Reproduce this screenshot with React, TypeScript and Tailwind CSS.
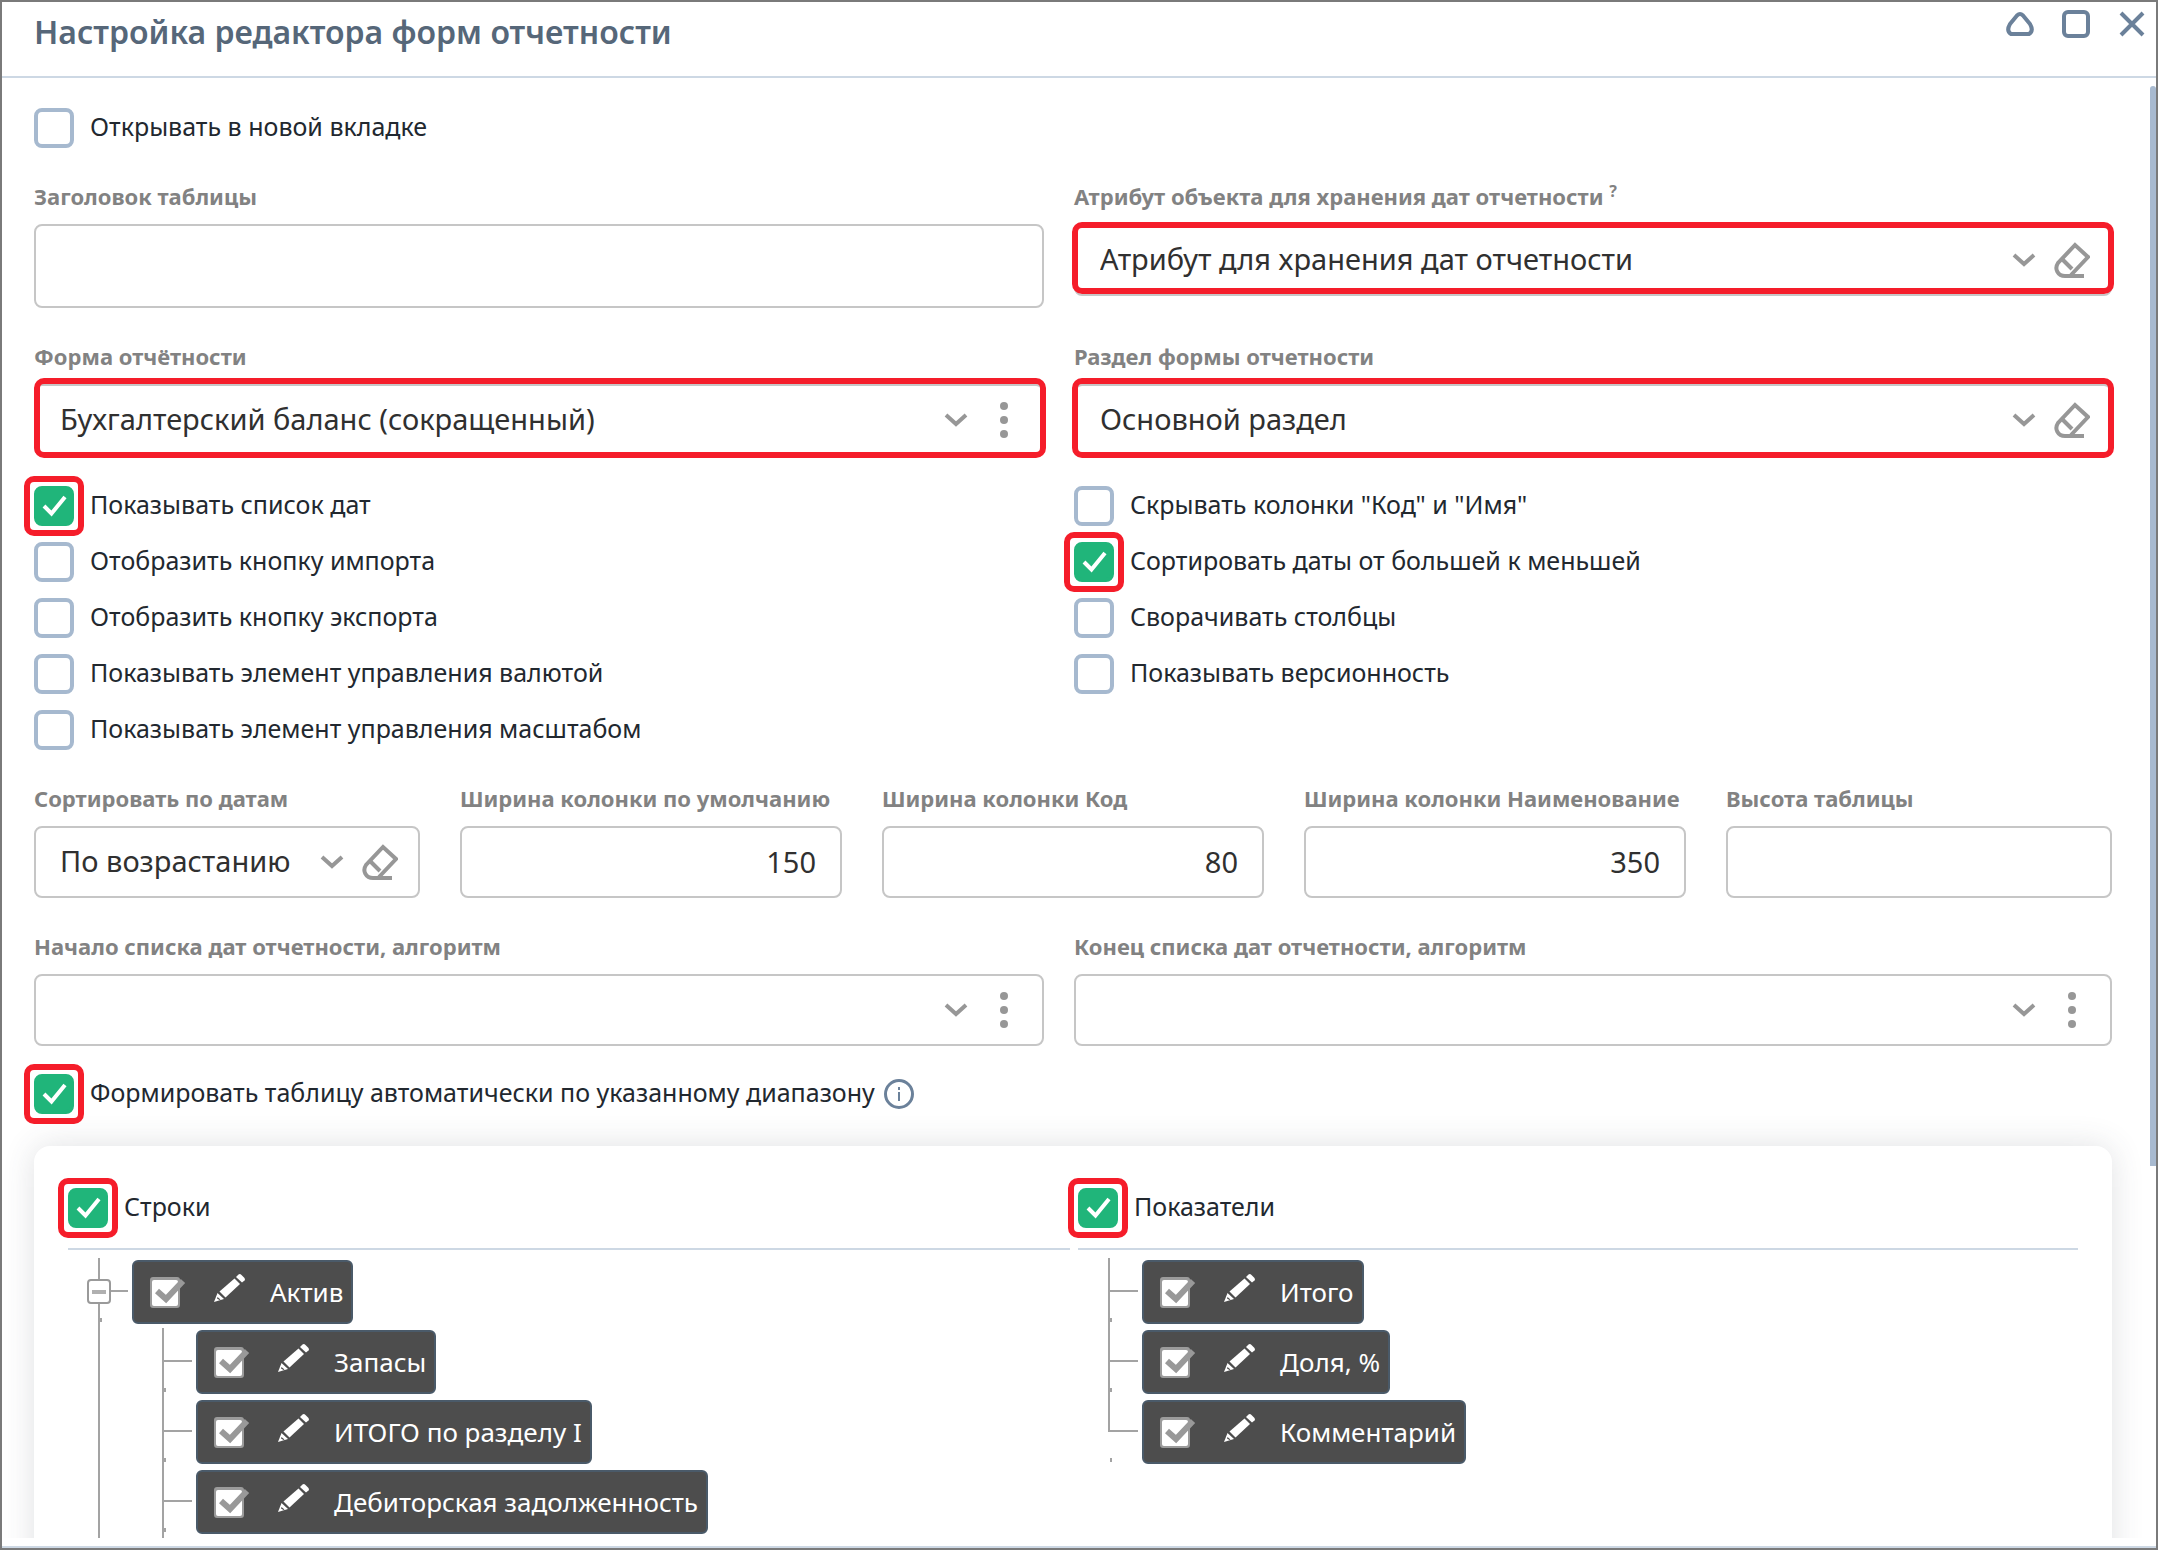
import type { ReactNode } from 'react';
import { useId } from 'react';

function ChevronIcon() {
  return (
    <svg className="pointer-events-none h-6 w-6 shrink-0" viewBox="0 0 24 24" fill="none" stroke="#979797" strokeWidth="4">
      <path d="M2 7 L12 16 L22 7" />
    </svg>
  );
}

function EraserIcon() {
  return (
    <svg className="h-9 w-9" viewBox="0 0 36 36" fill="none" stroke="#979797" strokeWidth="4" strokeLinejoin="miter">
      <path d="M30 34 H11 C4 34 0 27 4 21 L21 3 L34 15 L17 33" />
      <path d="M8 17 L18 27" />
    </svg>
  );
}

function DotsIcon() {
  return (
    <svg className="h-9 w-9" viewBox="0 0 36 36" fill="#979797">
      <circle cx="18" cy="4" r="4" />
      <circle cx="18" cy="18" r="4" />
      <circle cx="18" cy="32" r="4" />
    </svg>
  );
}

function FieldLabel({ htmlFor, children }: { htmlFor: string; children: ReactNode }) {
  return (
    <label htmlFor={htmlFor} className="mb-3 block h-7 text-[22px] leading-6 font-bold whitespace-nowrap text-[#828282]">
      {children}
    </label>
  );
}

interface SelectFieldProps {
  label: ReactNode;
  value?: string;
  action: 'clear' | 'menu';
  frame?: string;
}

function SelectField({ label, value = '', action, frame }: SelectFieldProps) {
  const id = useId();
  return (
    <div className="min-w-0">
      <FieldLabel htmlFor={id}>{label}</FieldLabel>
      <div className="relative flex h-[72px] items-center rounded-lg border-2 border-[#c6c6c6] pr-5">
        <select id={id} className="h-full min-w-0 flex-1 appearance-none bg-transparent pb-[2px] pl-6 text-[29px] text-[#303030] outline-none">
          <option>{value}</option>
        </select>
        <ChevronIcon />
        <button type="button" aria-label={action === 'clear' ? 'Очистить' : 'Меню'} className="ml-[18px] shrink-0">
          {action === 'clear' ? <EraserIcon /> : <DotsIcon />}
        </button>
        {frame && <span className={`pointer-events-none absolute rounded-[10px] border-6 border-[#f51d2a] ${frame}`} />}
      </div>
    </div>
  );
}

interface TextFieldProps {
  label: string;
  value?: string;
  tall?: boolean;
}

function TextField({ label, value = '', tall }: TextFieldProps) {
  const id = useId();
  return (
    <div className="min-w-0">
      <FieldLabel htmlFor={id}>{label}</FieldLabel>
      <input
        id={id}
        type="text"
        defaultValue={value}
        className={`block w-full rounded-lg border-2 border-[#c6c6c6] px-6 pb-[2px] text-right text-[29px] text-[#303030] outline-none ${tall ? 'h-[84px]' : 'h-[72px]'}`}
      />
    </div>
  );
}

interface CheckProps {
  label: string;
  checked?: boolean;
}

function Check({ label, checked = false }: CheckProps) {
  return (
    <label className="flex h-10 items-center gap-4 text-[25px] whitespace-nowrap text-[#22282f]">
      <span className="relative block h-10 w-10 shrink-0">
        <input
          type="checkbox"
          defaultChecked={checked}
          className="block h-10 w-10 appearance-none rounded-lg border-4 border-[#a6b9cf] checked:border-[#20b57a] checked:bg-[#20b57a]"
        />
        {checked && (
          <>
            <svg className="pointer-events-none absolute inset-0 h-10 w-10" viewBox="0 0 40 40" fill="none" stroke="#fff" strokeWidth="4">
              <path d="M10 20 L17.5 27.500 L31 11" />
            </svg>
            <span className="pointer-events-none absolute -inset-[10px] rounded-[10px] border-6 border-[#f51d2a]" />
          </>
        )}
      </span>
      <span className="pb-[2px]">{label}</span>
    </label>
  );
}

interface TreeRowProps {
  label: string;
  last?: boolean;
  expandable?: boolean;
}

function TreeRow({ label, last, expandable }: TreeRowProps) {
  return (
    <div className="relative flex h-[70px] items-start">
      <svg className="h-[70px] w-[34px] shrink-0" viewBox="0 0 34 70" fill="#a3a3a3">
        <rect x="0" y="0" width="2" height={last ? 34 : 70} />
        <rect x="0" y="32" width="30" height="2" />
        <rect x="2" y="60" width="2" height="4" />
      </svg>
      {expandable && (
        <button type="button" aria-label="Свернуть" className="absolute top-5 -left-3">
          <svg className="h-[26px] w-[26px]" viewBox="0 0 26 26">
            <rect x="2" y="2" width="22" height="23" rx="3" fill="#fff" stroke="#9a9a9a" strokeWidth="2" />
            <rect x="6" y="12" width="14" height="4" fill="#b0b0b0" />
          </svg>
        </button>
      )}
      <div className="mt-[2px] flex h-16 items-center rounded-md border-2 border-[#4a5a69] bg-[#4d4d4d] pr-2 pl-4 text-[26px] whitespace-nowrap text-white">
        <svg className="h-9 w-9" viewBox="0 0 36 36">
          <rect x="0" y="3" width="30" height="31" rx="3" fill="#9b9b9b" />
          <rect x="2" y="6" width="26" height="26" rx="2" fill="#fff" />
          <path d="M7 17 L16 25 L33 7" fill="none" stroke="#999" strokeWidth="6" />
        </svg>
        <button type="button" aria-label="Изменить" className="ml-7">
          <svg className="mb-2 h-8 w-8" viewBox="0 0 32 32" fill="#fff">
            <path d="M0 30 L3.5 21 L10 27 Z" />
            <path d="M3.500 25 L6.500 27.500 L5.500 28 L3 26.500 Z" fill="#4d4d4d" />
            <path d="M5.500 19.500 L20.500 6.500 L26 12 L11.500 25.500 Z" />
            <path d="M22 5 L24.500 2.500 Q26 1.500 27.500 3 L30.500 6 Q31.500 7.500 30.500 8.500 L28 10.500 Z" />
          </svg>
        </button>
        <span className="ml-6">{label}</span>
      </div>
    </div>
  );
}

const leftChecks: CheckProps[] = [
  { label: 'Показывать список дат', checked: true },
  { label: 'Отобразить кнопку импорта' },
  { label: 'Отобразить кнопку экспорта' },
  { label: 'Показывать элемент управления валютой' },
  { label: 'Показывать элемент управления масштабом' },
];

const rightChecks: CheckProps[] = [
  { label: 'Скрывать колонки "Код" и "Имя"' },
  { label: 'Сортировать даты от большей к меньшей', checked: true },
  { label: 'Сворачивать столбцы' },
  { label: 'Показывать версионность' },
];

const rows = ['Запасы', 'ИТОГО по разделу I', 'Дебиторская задолженность'];
const indicators = ['Итого', 'Доля, %', 'Комментарий'];

export default function App() {
  return (
    <div className="flex h-screen flex-col overflow-hidden border-2 border-[#7a7a7a] bg-white font-['Noto_Sans',sans-serif]">
      <header className="flex h-[76px] shrink-0 items-start justify-between border-b-2 border-[#cdd8e4] pt-2 pr-[10px] pl-8">
        <h1 className="text-[32px] leading-11 font-semibold text-[#566779]">Настройка редактора форм отчетности</h1>
        <div className="flex gap-7 text-[#6b819a]">
          <button type="button" aria-label="Свернуть окно">
            <svg className="h-7 w-7" viewBox="0 0 28 28" fill="none" stroke="currentColor" strokeWidth="4" strokeLinejoin="round">
              <path d="M11 5.500 Q14 2.500 17 5.500 L24 14 Q28 21 23 24 H5 Q0 21 4 14 Z" />
            </svg>
          </button>
          <button type="button" aria-label="Развернуть окно">
            <svg className="h-7 w-7" viewBox="0 0 28 28" fill="none" stroke="currentColor" strokeWidth="4">
              <rect x="2" y="2" width="24" height="24" rx="4" />
            </svg>
          </button>
          <button type="button" aria-label="Закрыть">
            <svg className="h-7 w-7" viewBox="0 0 28 28" fill="none" stroke="currentColor" strokeWidth="4">
              <path d="M3 3 L25 25 M25 3 L3 25" />
            </svg>
          </button>
        </div>
      </header>

      <div className="flex min-h-0 flex-1 overflow-hidden">
        <main className="min-w-0 flex-1 pt-[30px] pr-[38px] pl-8">
          <Check label="Открывать в новой вкладке" />

          <div className="mt-9 grid grid-cols-[1010fr_1038fr] gap-x-[30px]">
            <TextField label="Заголовок таблицы" tall />
            <SelectField
              label={<>Атрибут объекта для хранения дат отчетности <sup className="text-[16px]">?</sup></>}
              value="Атрибут для хранения дат отчетности"
              action="clear"
              frame="-inset-x-1 -top-1 bottom-0"
            />
          </div>

          <div className="mt-9 grid grid-cols-[1010fr_1038fr] gap-x-[30px]">
            <SelectField
              label="Форма отчётности"
              value="Бухгалтерский баланс (сокращенный)"
              action="menu"
              frame="-top-2 -bottom-1 -left-[2px] -right-1"
            />
            <SelectField label="Раздел формы отчетности" value="Основной раздел" action="clear" frame="-inset-x-1 -top-2 -bottom-1" />
          </div>

          <div className="mt-[30px] grid grid-cols-[1010fr_1038fr] gap-x-[30px]">
            <div className="flex flex-col gap-4">
              {leftChecks.map((c) => <Check key={c.label} {...c} />)}
            </div>
            <div className="flex flex-col gap-4">
              {rightChecks.map((c) => <Check key={c.label} {...c} />)}
            </div>
          </div>

          <div className="mt-9 grid grid-cols-[386fr_382fr_382fr_382fr_386fr] gap-x-10">
            <SelectField label="Сортировать по датам" value="По возрастанию" action="clear" />
            <TextField label="Ширина колонки по умолчанию" value="150" />
            <TextField label="Ширина колонки Код" value="80" />
            <TextField label="Ширина колонки Наименование" value="350" />
            <TextField label="Высота таблицы" />
          </div>

          <div className="mt-9 grid grid-cols-[1010fr_1038fr] gap-x-[30px]">
            <SelectField label="Начало списка дат отчетности, алгоритм" action="menu" />
            <SelectField label="Конец списка дат отчетности, алгоритм" action="menu" />
          </div>

          <div className="mt-7 flex items-center gap-2">
            <Check label="Формировать таблицу автоматически по указанному диапазону" checked />
            <svg className="h-8 w-8" viewBox="0 0 32 32" fill="none" stroke="#6b819a">
              <circle cx="16" cy="16" r="13.500" strokeWidth="3" />
              <path d="M16 14 V23 M16 9 V12" strokeWidth="2" />
            </svg>
          </div>

          <section className="mt-8 grid grid-cols-[1002fr_1000fr] gap-x-2 rounded-2xl bg-white px-[34px] pt-[42px] pb-16 shadow-[0_0_32px_rgba(60,70,80,0.16)]">
            <div>
              <Check label="Строки" checked />
              <div className="mt-5 mb-2 h-[2px] bg-[#cdd8e4]" />
              <ul className="ml-[30px]">
                <li>
                  <TreeRow label="Актив" expandable />
                  <ul className="border-l-2 border-[#a3a3a3] pl-[62px]">
                    {rows.map((r) => <li key={r}><TreeRow label={r} /></li>)}
                  </ul>
                </li>
              </ul>
            </div>
            <div>
              <Check label="Показатели" checked />
              <div className="mt-5 mb-2 h-[2px] bg-[#cdd8e4]" />
              <ul className="ml-[30px]">
                {indicators.map((r, i) => (
                  <li key={r}><TreeRow label={r} last={i === indicators.length - 1} /></li>
                ))}
              </ul>
            </div>
          </section>
        </main>
        <div className="mt-2 h-[1080px] w-[6px] shrink-0 rounded-t-sm bg-[#a8bad0]" />
      </div>
      <footer className="h-[10px] shrink-0 border-b-2 border-[#cdd8e4]" />
    </div>
  );
}
